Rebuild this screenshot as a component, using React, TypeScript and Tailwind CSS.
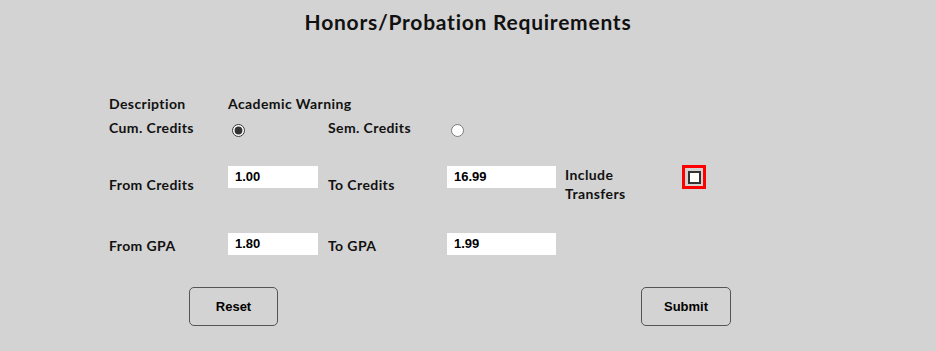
import { useState } from 'react';

const label = "text-[14px] font-bold tracking-[0.4px] text-[#111] leading-[19px]";
const inputCls =
  "w-[90px] h-[22px] bg-white px-[7px] text-[13px] font-bold text-black outline-none font-['Liberation_Sans',Arial,sans-serif]";
const btnCls =
  "h-[39px] rounded-[5px] border border-[#555] bg-transparent text-[13px] font-bold text-black font-['Liberation_Sans',Arial,sans-serif]";

const App = () => {
  const [basis, setBasis] = useState<'cum' | 'sem'>('cum');
  const [transfers, setTransfers] = useState(false);
  const [fromCredits, setFromCredits] = useState('1.00');
  const [toCredits, setToCredits] = useState('16.99');
  const [fromGpa, setFromGpa] = useState('1.80');
  const [toGpa, setToGpa] = useState('1.99');

  return (
    <div className="w-[936px] h-[351px] bg-[#d3d3d3] font-['Lato',sans-serif] text-[#111]">
      {/* Title */}
      <h1 className="pt-[9px] text-center text-[21px] font-bold tracking-[0.75px] leading-[26px] text-[#111]">
        Honors/Probation Requirements
      </h1>

      {/* Form grid */}
      <div className="mt-[59px] ml-[109px] grid grid-cols-[119px_100px_119px_118px_120px_40px]">
        {/* Row 1 */}
        <div className={`${label} h-[20px]`}>Description</div>
        <div className={`${label} col-span-5 h-[20px]`}>Academic Warning</div>

        {/* Row 2 */}
        <div className={`${label} mt-[4px]`}>Cum. Credits</div>
        <div className="mt-[4px] pt-[6px] pl-[4px]">
          <input
            type="radio"
            name="basis"
            checked={basis === 'cum'}
            onChange={() => setBasis('cum')}
            className="block w-[13px] h-[13px] m-0 accent-[#333]"
          />
        </div>
        <div className={`${label} mt-[4px]`}>Sem. Credits</div>
        <div className="mt-[4px] pt-[6px] pl-[4px] col-span-3">
          <input
            type="radio"
            name="basis"
            checked={basis === 'sem'}
            onChange={() => setBasis('sem')}
            className="block w-[13px] h-[13px] m-0 accent-[#333]"
          />
        </div>

        {/* Row 3 */}
        <div className={`${label} mt-[34px] pt-[4px]`}>From Credits</div>
        <div className="mt-[26px]">
          <input className={inputCls} value={fromCredits} onChange={(e) => setFromCredits(e.target.value)} />
        </div>
        <div className={`${label} mt-[34px] pt-[4px]`}>To Credits</div>
        <div className="mt-[26px]">
          <input className={`${inputCls} w-[109px]`} value={toCredits} onChange={(e) => setToCredits(e.target.value)} />
        </div>
        <div className={`${label} mt-[28px]`}>
          Include
          <br />
          Transfers
        </div>
        <div className="mt-[28px] -ml-[3px]">
          <div className="w-[24px] h-[24px] border-[3px] border-[#ff0000] flex items-center justify-center">
            <input
              type="checkbox"
              checked={transfers}
              onChange={(e) => setTransfers(e.target.checked)}
              className="block w-[13px] h-[13px] m-0 appearance-none bg-white border-2 border-[#333] checked:bg-[#333]"
            />
          </div>
        </div>

        {/* Row 4 */}
        <div className={`${label} mt-[30px] pt-[3px]`}>From GPA</div>
        <div className="mt-[27px]">
          <input className={inputCls} value={fromGpa} onChange={(e) => setFromGpa(e.target.value)} />
        </div>
        <div className={`${label} mt-[30px] pt-[3px]`}>To GPA</div>
        <div className="mt-[27px] col-span-3">
          <input className={`${inputCls} w-[109px]`} value={toGpa} onChange={(e) => setToGpa(e.target.value)} />
        </div>
      </div>

      {/* Buttons */}
      <div className="mt-[32px] flex">
        <button className={`${btnCls} ml-[189px] w-[89px]`}>Reset</button>
        <button className={`${btnCls} ml-[363px] w-[90px]`}>Submit</button>
      </div>
    </div>
  );
};

export default App;
